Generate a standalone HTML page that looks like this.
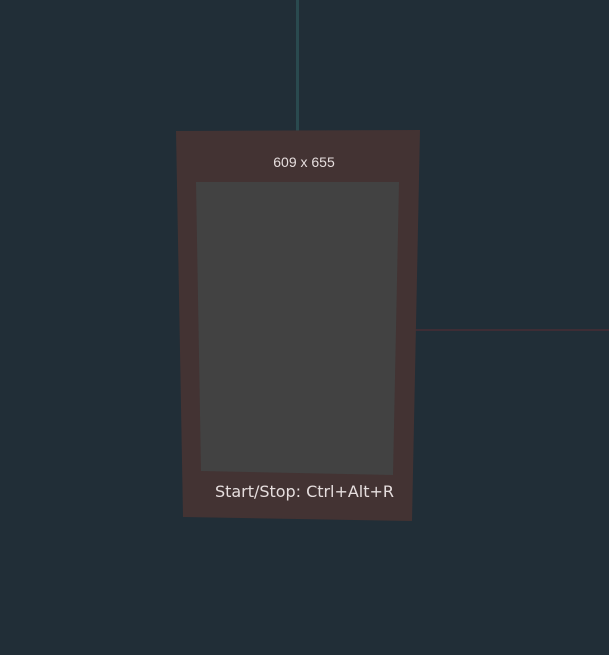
<!DOCTYPE html>
<html><head><meta charset="utf-8"><style>
html,body{margin:0;padding:0;background:#212e37;width:609px;height:655px;overflow:hidden}
svg{display:block}
</style></head><body>
<svg width="609" height="655" viewBox="0 0 609 655" xmlns="http://www.w3.org/2000/svg">
<rect width="609" height="655" fill="#212e37"/>
<rect x="296" y="0" width="3" height="131" fill="#2a4a4f"/>
<rect x="414" y="329" width="195" height="2" fill="#3e2d35"/>
<polygon points="176,131 420,130 412,521 183,517" fill="#433333"/>
<polygon points="196,182 399,182 393,475 201,471" fill="#424242"/>
<text x="304" y="167" text-anchor="middle" font-family="Liberation Sans, DejaVu Sans, sans-serif" font-size="14" fill="#e6dede">609 x 655</text>
<text x="215" y="497" font-family="DejaVu Sans, Liberation Sans, sans-serif" font-size="16" fill="#e6dede" textLength="179">Start/Stop: Ctrl+Alt+R</text>
</svg>
</body></html>
